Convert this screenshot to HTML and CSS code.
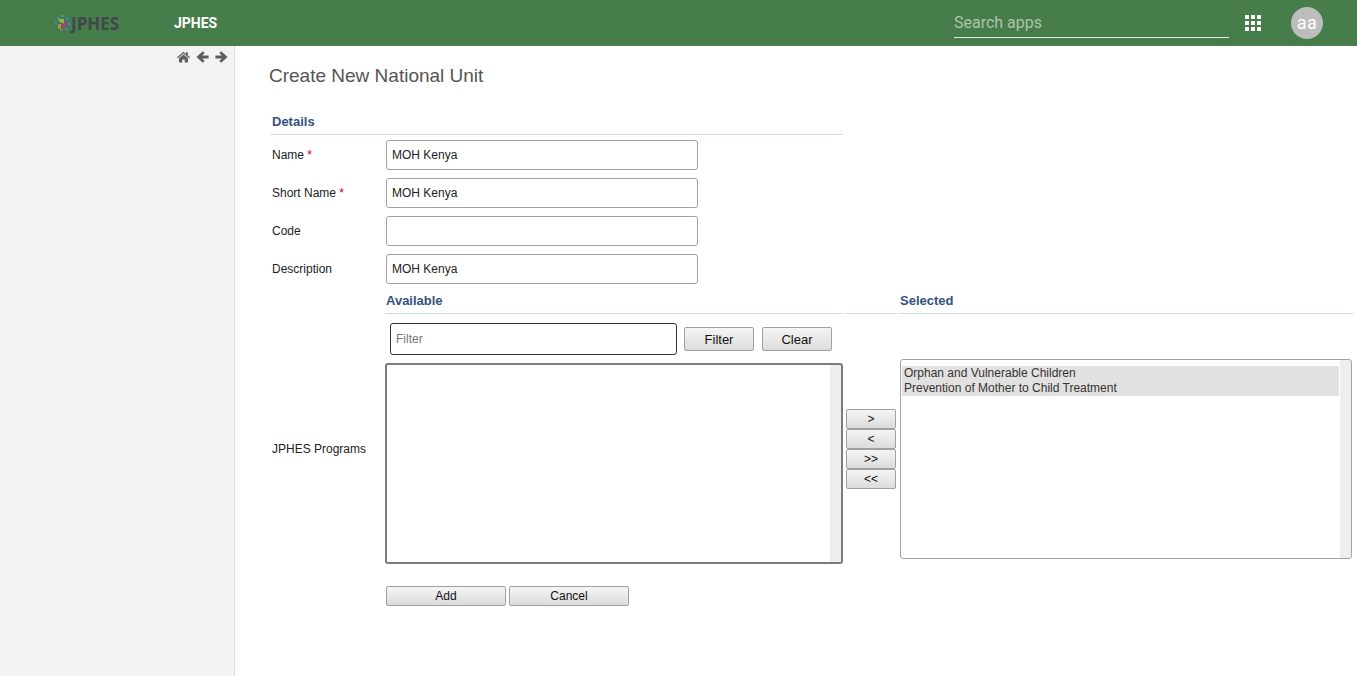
FILE: index.html
```html
<!DOCTYPE html>
<html lang="en">
<head>
    <meta charset="UTF-8">
    <meta name="viewport" content="width=device-width, initial-scale=1.0">
    <title>Create New National Unit</title>
    <link rel="stylesheet" href="styles.css">
</head>
<body>
    <header class="topbar">
        <div class="logo">
            <svg class="logo-globe" width="18" height="19" viewBox="0 0 18 19">
                <circle cx="9" cy="9.500" r="8.500" fill="#43745a"/>
                <rect x="1" y="7" width="2" height="5" fill="#2f9c98"/>
                <rect x="3" y="3" width="3" height="3" fill="#3b9f93"/>
                <rect x="7" y="1" width="4" height="2" fill="#3fa08f"/>
                <rect x="5" y="5" width="2" height="3" fill="#c9ba3d"/>
                <rect x="7" y="5" width="3" height="4" fill="#b6c23c"/>
                <rect x="8" y="9" width="3" height="6" fill="#c2357e"/>
                <rect x="11" y="8" width="2" height="5" fill="#a83a8c"/>
                <rect x="4" y="10" width="3" height="5" fill="#d8952b"/>
                <rect x="6" y="15" width="3" height="2" fill="#4aa36a"/>
                <rect x="12" y="3" width="3" height="3" fill="#2f8fb5"/>
                <rect x="14" y="7" width="2" height="5" fill="#2f8fb5"/>
                <rect x="11" y="14" width="3" height="2" fill="#2aa5a0"/>
            </svg>
            <span class="logo-text">JPHES</span>
        </div>
        <div class="brand">JPHES</div>
        <input class="search" type="text" placeholder="Search apps">
        <div class="apps">
            <i></i><i></i><i></i><i></i><i></i><i></i><i></i><i></i><i></i>
        </div>
        <div class="avatar">aa</div>
    </header>

    <div class="page">
        <aside class="sidebar">
            <!-- home, back, forward -->
            <svg width="13" height="12" viewBox="0 0 13 12"><path d="M6.5.8 0 6.300l.8 1L6.500 2.600l5.700 4.700.8-1L10.800 4.500V1.200H9V3zM2 7.300V11.600H5.300V8.400H7.700V11.600H11V7.300L6.500 3.600z" fill="#5f5f5f"/></svg>
            <svg width="13" height="12" viewBox="0 0 13 12"><path d="M6.800.2 8.700 2.100 6.200 4.400H12.600V7.600H6.200L8.700 9.900 6.800 11.800.4 6z" fill="#5f5f5f"/></svg>
            <svg width="13" height="12" viewBox="0 0 13 12"><path d="M6.200.2 4.300 2.100 6.800 4.400H.4V7.600H6.800L4.300 9.900 6.200 11.800 12.600 6z" fill="#5f5f5f"/></svg>
        </aside>

        <main class="content">
            <h1 class="title">Create New National Unit</h1>

            <form class="unit-form">
                <h2 class="section-head details-head">Details</h2>

                <div class="field">
                    <label for="name">Name <span class="req">*</span></label>
                    <input type="text" id="name" value="MOH Kenya">
                </div>
                <div class="field">
                    <label for="shortName">Short Name <span class="req">*</span></label>
                    <input type="text" id="shortName" value="MOH Kenya">
                </div>
                <div class="field">
                    <label for="code">Code</label>
                    <input type="text" id="code">
                </div>
                <div class="field">
                    <label for="description">Description</label>
                    <input type="text" id="description" value="MOH Kenya">
                </div>

                <div class="transfer">
                    <div></div>
                    <h2 class="section-head">Available</h2>
                    <div class="section-head"></div>
                    <h2 class="section-head">Selected</h2>

                    <div class="transfer-label">JPHES Programs</div>
                    <div class="available">
                        <div class="filter-row">
                            <input class="filter-input" type="text" placeholder="Filter">
                            <button type="button" class="btn filter-btn">Filter</button>
                            <button type="button" class="btn filter-btn">Clear</button>
                        </div>
                        <div class="listbox listbox-dark"></div>
                    </div>
                    <div class="movers">
                        <button type="button" class="btn mover">&gt;</button>
                        <button type="button" class="btn mover">&lt;</button>
                        <button type="button" class="btn mover">&gt;&gt;</button>
                        <button type="button" class="btn mover">&lt;&lt;</button>
                    </div>
                    <div class="selected">
                        <div class="listbox">
                            <div class="option">Orphan and Vulnerable Children</div>
                            <div class="option">Prevention of Mother to Child Treatment</div>
                        </div>
                    </div>
                </div>

                <div class="actions">
                    <button type="button" class="btn action">Add</button>
                    <button type="button" class="btn action">Cancel</button>
                </div>
            </form>
        </main>
    </div>
</body>
</html>
```

FILE: styles.css
```css
* {
    box-sizing: border-box;
}
body {
    margin: 0;
    height: 676px;
    overflow: hidden;
    font-family: "Liberation Sans", Arial, sans-serif;
    font-size: 12px;
    color: #222;
    background: white;
}
.topbar {
    display: flex;
    align-items: center;
    height: 46px;
    background: #477d4a;
    padding-left: 54px;
}
.logo {
    display: flex;
    align-items: center;
    width: 120px;
}
.logo-globe {
    opacity: 0.75;
}
.logo-text {
    font-family: "Open Sans", sans-serif;
    font-size: 17px;
    font-weight: 700;
    color: #41474a;
    margin-left: -1px;
}
.brand {
    font-family: Roboto, sans-serif;
    font-size: 14px;
    font-weight: 700;
    color: white;
    width: 780px;
}
.search {
    width: 275px;
    height: 30px;
    margin-top: -1px;
    padding: 0;
    border: none;
    border-bottom: 1px solid #e4ede5;
    outline: none;
    background: transparent;
    color: white;
    font-family: Roboto, sans-serif;
    font-size: 16px;
}
.search::placeholder {
    color: #a9c6ab;
    opacity: 1;
}
.apps {
    display: grid;
    grid-template-columns: repeat(3, 4px);
    grid-auto-rows: 4px;
    gap: 2px;
    margin-left: 16px;
}
.apps i {
    background: white;
}
.avatar {
    width: 32px;
    height: 32px;
    margin-left: 30px;
    border-radius: 50%;
    background: #bdbdbd;
    color: white;
    font-family: Roboto, sans-serif;
    font-size: 18px;
    letter-spacing: 0.5px;
    line-height: 32px;
    text-align: center;
}
.page {
    display: flex;
    height: 630px;
}
.sidebar {
    display: flex;
    justify-content: flex-end;
    gap: 6px;
    width: 235px;
    padding: 5px 6px 0 0;
    background: #f3f3f3;
    border-right: 1px solid #ddd;
}
.sidebar svg {
    flex: none;
}
.content {
    flex: 1;
    padding: 19px 0 0 34px;
}
.title {
    margin: 0;
    font-size: 19px;
    font-weight: normal;
    line-height: 22px;
    color: #555;
}
.unit-form {
    margin: 25px 0 0 2px;
}
.section-head {
    margin: 0;
    height: 23px;
    padding: 2px 0 0 1px;
    font-size: 13px;
    font-weight: bold;
    line-height: 16px;
    color: #34527f;
    border-bottom: 1px solid #cfdbe4;
}
.details-head {
    width: 572px;
    margin-bottom: 5px;
}
.field {
    display: flex;
    align-items: center;
    height: 30px;
    margin-bottom: 8px;
    padding-left: 1px;
}
.field label {
    width: 114px;
}
.req {
    color: #cc0000;
}
.field input {
    width: 312px;
    height: 30px;
    padding: 0 5px;
    border: 1px solid #a3a3a3;
    border-radius: 3px;
    font-family: "Liberation Sans", Arial, sans-serif;
    font-size: 12px;
    color: #222;
}
.transfer {
    display: grid;
    grid-template-columns: 112px 458px 52px 454px;
    grid-template-rows: 23px 273px;
    column-gap: 2px;
    margin-top: -1px;
}
.transfer-label {
    align-self: center;
    padding-left: 1px;
    padding-bottom: 3px;
}
.available {
    padding-top: 9px;
}
.filter-row {
    display: flex;
    align-items: center;
    height: 32px;
    padding-left: 5px;
    margin-bottom: 8px;
}
.filter-input {
    width: 287px;
    height: 32px;
    padding: 0 5px;
    border: 1px solid #333;
    border-radius: 3px;
    font-family: "Liberation Sans", Arial, sans-serif;
    font-size: 12px;
    margin-right: 7px;
}
.filter-input::placeholder {
    color: #777;
    opacity: 1;
}
.btn {
    padding: 0;
    border: 1px solid #a0a0a0;
    border-radius: 2px;
    background: linear-gradient(#f5f5f5, #dcdcdc);
    font-family: "Liberation Sans", Arial, sans-serif;
    font-size: 12px;
    color: #111;
}
.filter-btn {
    width: 70px;
    height: 24px;
    margin-right: 8px;
    font-size: 13px;
}
.listbox {
    height: 200px;
    padding: 6px 12px 0 1px;
    background: linear-gradient(to left, #eeeeee 11px, transparent 11px);
    border: 1px solid #a3a3a3;
    border-radius: 3px;
    line-height: 15px;
}
.listbox-dark {
    height: 201px;
    border: 2px solid #7c7c7c;
}
.movers {
    display: flex;
    flex-direction: column;
    align-items: center;
    align-self: center;
    padding-bottom: 3px;
}
.mover {
    width: 50px;
    height: 20px;
}
.selected {
    padding: 45px 1px 0 1px;
}
.option {
    padding-left: 2px;
    background: #e3e1df;
    color: #333;
}
.actions {
    display: flex;
    gap: 3px;
    margin: -1px 0 0 115px;
}
.action {
    width: 120px;
    height: 20px;
}
```
